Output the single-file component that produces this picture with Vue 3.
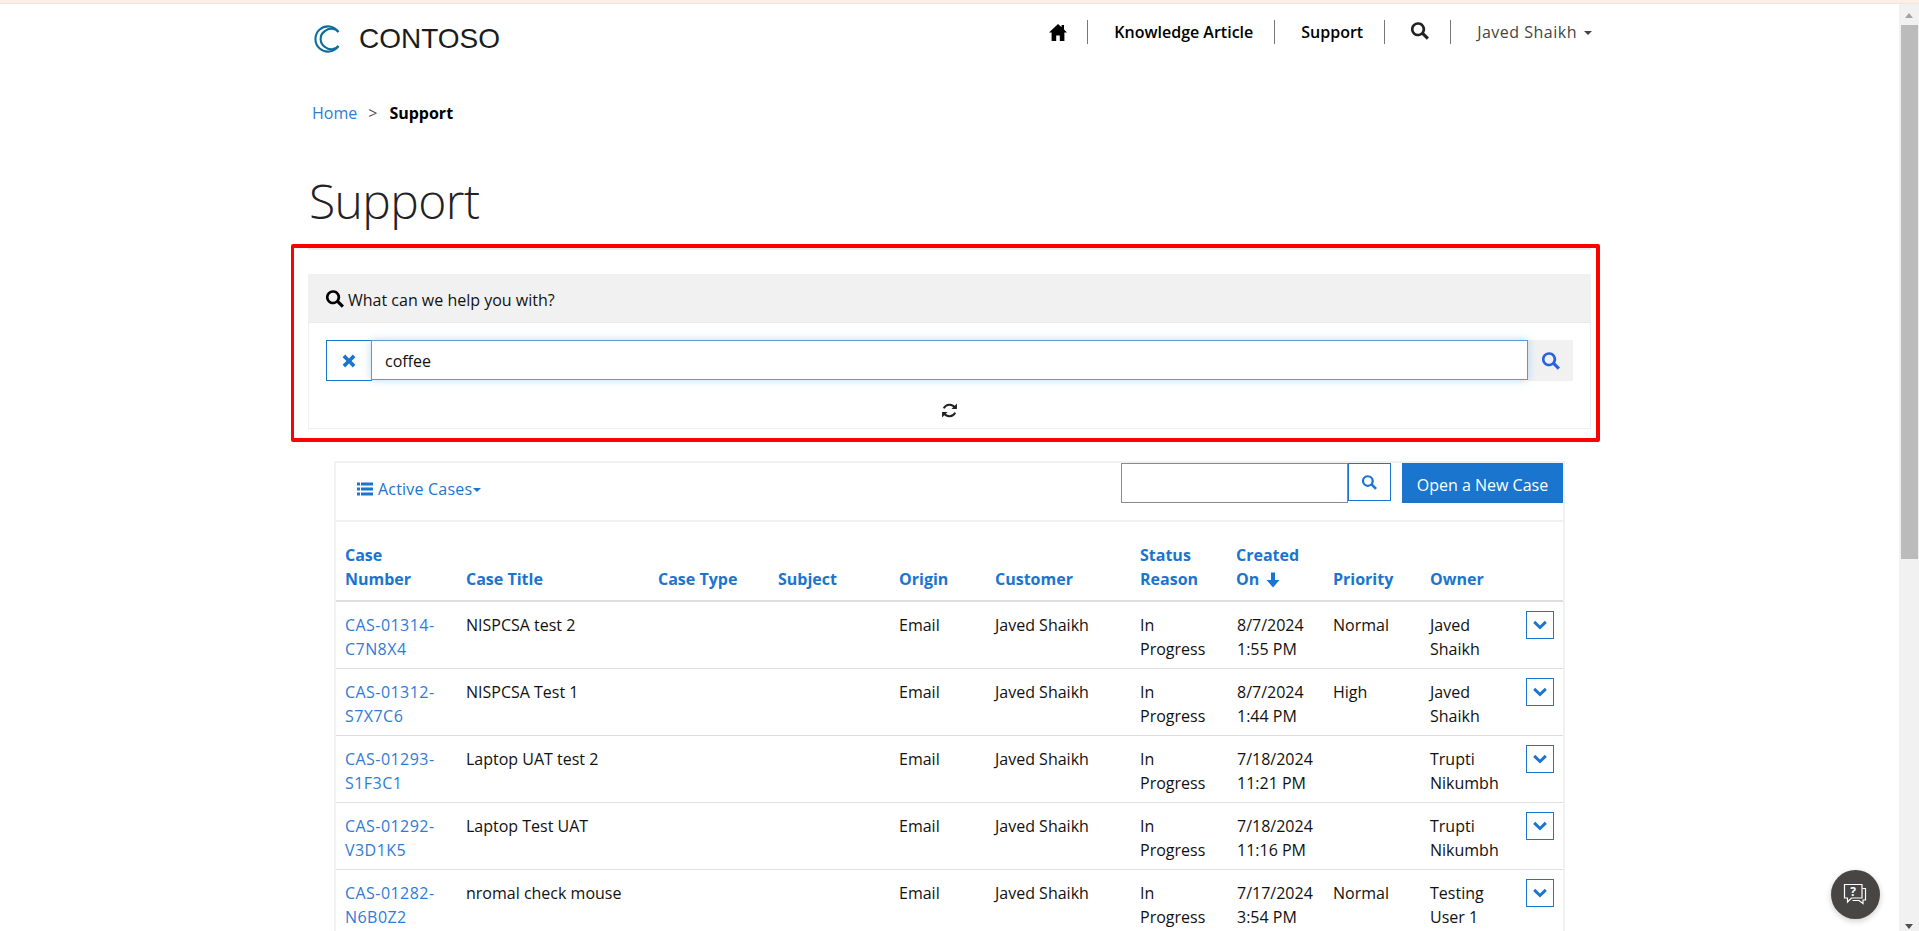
<script setup>
const rows = [
  { id: 'CAS-01314-\nC7N8X4', title: 'NISPCSA test 2', created: '8/7/2024\n1:55 PM', priority: 'Normal', owner: 'Javed\nShaikh' },
  { id: 'CAS-01312-\nS7X7C6', title: 'NISPCSA Test 1', created: '8/7/2024\n1:44 PM', priority: 'High', owner: 'Javed\nShaikh' },
  { id: 'CAS-01293-\nS1F3C1', title: 'Laptop UAT test 2', created: '7/18/2024\n11:21 PM', priority: '', owner: 'Trupti\nNikumbh' },
  { id: 'CAS-01292-\nV3D1K5', title: 'Laptop Test UAT', created: '7/18/2024\n11:16 PM', priority: '', owner: 'Trupti\nNikumbh' },
  { id: 'CAS-01282-\nN6B0Z2', title: 'nromal check mouse', created: '7/17/2024\n3:54 PM', priority: 'Normal', owner: 'Testing\nUser 1' }
]
const headers = ['Case\nNumber', 'Case Title', 'Case Type', 'Subject', 'Origin', 'Customer', 'Status\nReason']
const searchPath = 'M7 1a6 6 0 1 0 3.4 10.9l4.1 4.1 1.9-1.9-4.1-4.1A6 6 0 0 0 7 1zm0 2.2a3.8 3.8 0 1 1 0 7.6 3.8 3.8 0 0 1 0-7.6z'
const searchBox = '1 1 15.4 15'
</script>

<template>
  <div class="shell">
    <div class="strip"></div>
    <div class="body-row">
      <main class="page">
        <header class="top">
          <div class="brand">
            <svg class="logo" viewBox="0 0 28 28" fill="none" stroke="#0f6d9c" stroke-width="2.1">
              <path d="M25.5 7A12.6 12.6 0 1 0 25.5 21" />
              <path d="M25.5 7A9.5 9.5 0 0 0 12 6 9.5 9.5 0 0 0 12 22 9.5 9.5 0 0 0 25.5 21" />
            </svg>
            <span class="brand-name">CONTOSO</span>
          </div>
          <nav class="nav">
            <svg class="nav-home" viewBox="0 0 18 17"><path d="M9 0 0 8.5h2.6V17h4.6v-5.4h3.6V17h4.6V8.5H18L15 5.6V1h-2.4v2.3z" fill="#000" /></svg>
            <span class="nav-sep first"></span>
            <a class="nav-link">Knowledge Article</a>
            <span class="nav-sep"></span>
            <a class="nav-link">Support</a>
            <span class="nav-sep"></span>
            <svg class="nav-search" :viewBox="searchBox"><path :d="searchPath" fill="#222" /></svg>
            <span class="nav-sep"></span>
            <a class="nav-user">Javed Shaikh</a>
            <span class="caret grey"></span>
          </nav>
        </header>

        <div class="crumbs">
          <a class="crumb-link">Home</a>
          <span class="crumb-gt">&gt;</span>
          <b class="crumb-cur">Support</b>
        </div>

        <h1 class="title">Support</h1>

        <section class="highlight">
          <div class="rule"></div>
          <div class="search-panel">
            <div class="search-head">
              <svg class="head-icon" :viewBox="searchBox"><path :d="searchPath" fill="#000" /></svg>
              <span>What can we help you with?</span>
            </div>
            <div class="search-body">
              <div class="search-row">
                <button class="clear-btn" type="button" aria-label="Clear">
                  <svg viewBox="0 0 14 14" width="14" height="14"><path d="M3.2.6 7 4.4 10.8.6l2.6 2.6L9.6 7l3.8 3.8-2.6 2.6L7 9.6l-3.8 3.8-2.6-2.6L4.4 7 .6 3.2z" fill="#1a75cf" /></svg>
                </button>
                <input class="search-input" value="coffee" />
                <button class="go-btn" type="button" aria-label="Search">
                  <svg :viewBox="searchBox" width="18" height="18"><path :d="searchPath" fill="#2a62e0" /></svg>
                </button>
              </div>
              <div class="spinner-row">
                <svg viewBox="0 0 16 16" width="17" height="17" fill="none" stroke="#222" stroke-width="2">
                  <path d="M13.2 5.6A6 6 0 0 0 2.6 6" />
                  <path d="M2.8 10.4A6 6 0 0 0 13.4 10" />
                  <path d="M15 1.4v5.2H9.8z" fill="#222" stroke="none" />
                  <path d="M1 14.6V9.4h5.2z" fill="#222" stroke="none" />
                </svg>
              </div>
            </div>
          </div>
        </section>

        <section class="cases">
          <div class="toolbar">
            <a class="view-switch">
              <svg viewBox="0 0 16 14" width="16" height="14" fill="#1a75cf">
                <rect x="0" y="0.5" width="3" height="3" /><rect x="0" y="5.5" width="3" height="3" /><rect x="0" y="10.5" width="3" height="3" />
                <rect x="4" y="0.5" width="12" height="3" /><rect x="4" y="5.5" width="12" height="3" /><rect x="4" y="10.5" width="12" height="3" />
              </svg>
              <span class="view-name">Active Cases</span><span class="caret blue"></span>
            </a>
            <div class="tools">
              <input class="mini-input" />
              <button class="mini-btn" type="button" aria-label="Search">
                <svg :viewBox="searchBox" width="15" height="15"><path :d="searchPath" fill="#1a75cf" /></svg>
              </button>
              <button class="primary" type="button">Open a New Case</button>
            </div>
          </div>
          <table class="grid">
            <colgroup>
              <col style="width:122px" /><col style="width:192px" /><col style="width:120px" /><col style="width:121px" />
              <col style="width:96px" /><col style="width:145px" /><col style="width:97px" /><col style="width:96px" />
              <col style="width:97px" /><col style="width:96px" /><col />
            </colgroup>
            <thead>
              <tr>
                <th v-for="h in headers" :key="h">{{ h }}</th>
                <th class="sorted">Created<br />On
                  <svg class="sort" viewBox="0 0 14 15" width="14" height="16"><path d="M5 0h4v7.5h4.5L7 15 .5 7.5H5z" fill="#1a75cf" /></svg>
                </th>
                <th>Priority</th>
                <th>Owner</th>
                <th></th>
              </tr>
            </thead>
            <tbody>
              <tr v-for="r in rows" :key="r.id">
                <td class="link">{{ r.id }}</td>
                <td>{{ r.title }}</td>
                <td></td>
                <td></td>
                <td>Email</td>
                <td>Javed Shaikh</td>
                <td>In{{ '\n' }}Progress</td>
                <td>{{ r.created }}</td>
                <td>{{ r.priority }}</td>
                <td>{{ r.owner }}</td>
                <td class="action-cell">
                  <button class="row-btn" type="button" aria-label="Actions">
                    <svg viewBox="0 0 14 10" width="14" height="10"><path d="M2.2.8 7 5.4 11.8.8 13.8 2.9 7 9.4.2 2.9z" fill="#1a75cf" /></svg>
                  </button>
                </td>
              </tr>
            </tbody>
          </table>
        </section>
      </main>

      <aside class="scrollbar">
        <span class="arrow up"></span>
        <span class="thumb"></span>
        <span class="arrow down"></span>
      </aside>
    </div>

    <button class="chat" type="button" aria-label="Help">
      <svg viewBox="0 0 26 26" width="26" height="26" fill="none" stroke="#fff" stroke-width="1.2">
        <path d="M1.5 2.5H19V16H8.5l-4 4v-4h-3z" />
        <path d="M19.5 6.5H22.5V18h-2.5v3.5L16 18.5H9.5" />
        <text x="10.2" y="13.5" text-anchor="middle" class="chat-q">?</text>
      </svg>
    </button>
  </div>
</template>

<style scoped>
.shell {
  position: relative;
  width: 1919px;
  height: 931px;
  overflow: hidden;
  background: #fff;
  font-family: "Open Sans", "Noto Sans", sans-serif;
  font-size: 16px;
  line-height: 24px;
  color: #111;
}
.strip { height: 4px; background: #fcf0e6; border-bottom: 1px solid #f6e4d6; box-sizing: border-box; }
.body-row { display: flex; height: 927px; }
.page { flex: 1; min-width: 0; padding-left: 312px; box-sizing: border-box; }
.top { width: 1280px; height: 66px; display: flex; justify-content: space-between; align-items: flex-start; }
.brand { display: flex; align-items: center; margin-top: 21px; margin-left: 1px; }
.logo { width: 28px; height: 28px; margin-right: 18px; }
.brand-name { font-family: "Liberation Sans", Arial, sans-serif; font-size: 28px; line-height: 28px; color: #1c1c1c; }
.nav { display: flex; align-items: center; margin-top: 16px; height: 24px; }
.nav-home { width: 18px; height: 17px; }
.nav-sep { width: 1px; height: 24px; background: #777; margin: 0 26px 0 21px; }
.nav-sep.first { margin-left: 20px; }
.nav-link { font-weight: 600; color: #000; }
.nav-search { width: 18px; height: 18px; margin-top: -3px; }
.nav-user { color: #444; letter-spacing: .5px; }
.caret { display: inline-block; width: 0; height: 0; border-left: 4px solid transparent; border-right: 4px solid transparent; border-top: 4px solid #444; }
.caret.grey { margin-left: 7px; margin-top: 2px; }
.caret.blue { border-top-color: #1a75cf; }

.crumbs { margin-top: 31px; display: flex; align-items: center; height: 24px; }
.crumb-link { color: #2f7bd8; }
.crumb-gt { margin: 0 12px 0 11px; color: #555; }
.crumb-cur { color: #000; font-weight: 700; }

.title { margin: 46px 0 0 -3px; font-family: "Open Sans", sans-serif; font-weight: 300; font-size: 48px; letter-spacing: -.6px; line-height: 60px; color: #222; height: 60px; }

.highlight {
  box-sizing: border-box;
  margin: 13px 0 0 -21px;
  width: 1309px;
  height: 198px;
  border: 4px solid #f00;
  border-left-width: 3px;
  border-radius: 2px;
  padding: 0 5px 0 14px;
}
.rule { height: 2px; background: #eee; margin-bottom: 24px; }
.search-panel { border: 1px solid #eee; height: 155px; box-sizing: border-box; }
.search-head { height: 49px; box-sizing: border-box; background: #f1f1f1; border-bottom: 1px solid #eaeaea; padding: 3px 0 0 17px; display: flex; align-items: center; gap: 4px; margin: -1px -1px 0 -1px; }
.head-icon { width: 18px; height: 18px; margin-top: -2px; margin-left: 1px; }
.search-body { padding: 17px 17px 0 17px; }
.search-row { display: flex; align-items: flex-start; }
.clear-btn { width: 46px; height: 41px; box-sizing: border-box; background: #fff; border: 1px solid #1a75cf; padding: 0; display: flex; align-items: center; justify-content: center; }
.search-input { flex: 1; min-width: 0; height: 39.5px; box-sizing: border-box; border: 1px solid #5b97d2; padding: 2px 13px 0; font: inherit; color: #111; outline: none; box-shadow: 0 0 8px rgba(102, 175, 233, .45); margin-left: -1px; position: relative; z-index: 1; }
.go-btn { width: 45px; height: 41px; background: #f1f1f1; border: 0; padding: 0; display: flex; align-items: center; justify-content: center; }
.spinner-row { display: flex; justify-content: center; margin-top: 21px; }

.cases { box-sizing: border-box; margin: 19px 0 0 22px; width: 1231px; border: 2px solid #f1f1f1; border-bottom: 0; }
.toolbar { height: 59px; box-sizing: border-box; border-bottom: 2px solid #f1f1f1; display: flex; justify-content: space-between; align-items: flex-start; }
.view-switch { display: flex; align-items: center; gap: 5px; color: #1a75cf; margin: 14px 0 0 21px; }
.view-name { letter-spacing: .2px; }
.view-switch .caret { margin-left: -4px; margin-top: 2px; }
.tools { display: flex; align-items: flex-start; }
.mini-input { width: 227px; height: 40px; box-sizing: border-box; border: 1px solid #8a8a8a; padding: 0 8px; outline: none; }
.mini-btn { width: 43px; height: 38px; box-sizing: border-box; background: #fff; border: 1px solid #1a75cf; padding: 0; display: flex; align-items: center; justify-content: center; }
.primary { width: 161px; height: 40px; margin-left: 11px; background: #1a75cf; color: #fff; border: 0; font: inherit; padding: 3px 0 0; }
.grid { width: 1227px; table-layout: fixed; border-collapse: collapse; }
th { vertical-align: bottom; text-align: left; padding: 21px 8px 9px; color: #1a75cf; font-weight: 700; white-space: pre-line; border-bottom: 2px solid #ddd; }
td { vertical-align: top; padding: 11px 8px 7px; white-space: pre-line; border-bottom: 1px solid #ddd; height: 48px; }
th:first-child, td:first-child { padding-left: 9px; }
.sorted { padding-left: 7px; }
.link { color: #2f7bd8; letter-spacing: .45px; }
.sort { vertical-align: -3px; margin-left: 3px; }
.action-cell { padding-top: 10px; padding-bottom: 8px; }
.row-btn { width: 28px; height: 28px; box-sizing: border-box; background: #fff; border: 1px solid #1a75cf; padding: 0; display: flex; align-items: center; justify-content: center; margin-top: -1px; }

.scrollbar { position: relative; width: 20px; height: 927px; background: #f1f1f1; flex: none; display: flex; flex-direction: column; align-items: center; }
.thumb { display: block; width: 17px; height: 534px; background: #bbb; margin-left: 1px; }
.arrow { display: block; width: 0; height: 0; border-left: 4.5px solid transparent; border-right: 4.5px solid transparent; }
.arrow.up { border-bottom: 5px solid #a3a3a3; margin: 9px 0 7px; }
.arrow.down { border-top: 5px solid #505050; margin-top: auto; margin-bottom: 2px; }

.chat { position: absolute; left: 1831px; top: 870px; width: 49px; height: 49px; border-radius: 50%; background: #484644; border: 0; padding: 0; display: flex; align-items: center; justify-content: center; box-shadow: 0 2px 6px rgba(0, 0, 0, .2); }
.chat-q { fill: #fff; stroke: none; font-size: 12px; font-weight: 700; font-family: "Open Sans", sans-serif; }
</style>

<style>
html, body { margin: 0; overflow: hidden; }
</style>
